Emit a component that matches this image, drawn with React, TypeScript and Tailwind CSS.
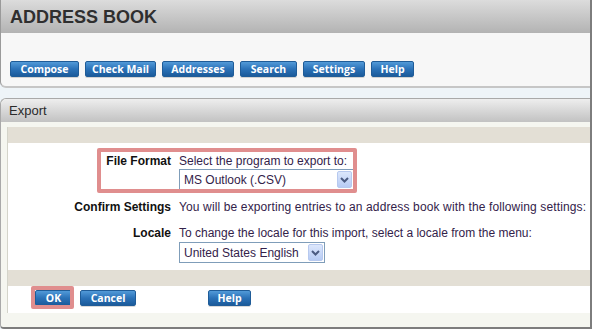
import React from "react";

function Btn({ label, w }: { label: string; w: string }) {
  return (
    <div
      className={`${w} h-[16px] rounded-[2px] border border-[#1f5c98] bg-gradient-to-b from-[#529ad8] via-[#2b72b8] to-[#1b5b9b] flex items-center justify-center text-white text-[10.5px] font-bold leading-none font-['Open_Sans',sans-serif] shadow-[0_1px_0_rgba(0,0,0,0.15)]`}
    >
      {label}
    </div>
  );
}

function Chevron() {
  return (
    <svg width="9" height="6" viewBox="0 0 9 6">
      <path d="M1 1 L4.5 4.5 L8 1" stroke="#4b5b82" strokeWidth="2" fill="none" />
    </svg>
  );
}

function Select({ text, w }: { text: string; w: string }) {
  return (
    <div
      className={`${w} h-[21px] border border-[#7f9db9] bg-white flex items-center justify-between pl-[4px] pr-[1px]`}
    >
      <span className="text-[12px] text-[#33224a] leading-none">{text}</span>
      <div className="w-[15px] h-[17px] rounded-[2px] border border-[#b7c9ef] bg-gradient-to-b from-[#dce7fc] to-[#b7cbf4] flex items-center justify-center">
        <Chevron />
      </div>
    </div>
  );
}

export default function App() {
  return (
    <div className="relative w-[592px] h-[329px] flex flex-col bg-[#eef4f8] border-r-2 border-r-[#7d7d7d] overflow-hidden font-['Liberation_Sans',Arial,sans-serif]">
      {/* Top panel */}
      <div className="h-[88px] flex flex-col bg-[#f7f7f7] border-l border-l-[#9a9a9a] border-b-2 border-b-[#c6c6c6] rounded-bl-[6px]">
        <div className="h-[33px] bg-gradient-to-b from-[#dcdcdc] to-[#b3b3b3] flex items-center pl-[9px]">
          <span className="text-[18px] font-bold text-[#2f2f2f] leading-none">ADDRESS BOOK</span>
        </div>
        <div className="flex gap-[6px] pl-[9px] pt-[28px]">
          <Btn label="Compose" w="w-[69px]" />
          <Btn label="Check Mail" w="w-[71px]" />
          <Btn label="Addresses" w="w-[72px]" />
          <Btn label="Search" w="w-[57px]" />
          <Btn label="Settings" w="w-[62px]" />
          <Btn label="Help" w="w-[43px]" />
        </div>
      </div>

      {/* Export panel */}
      <div className="mt-[10px] flex-1 flex flex-col border-l border-t border-[#a9a9a9] border-b-2 border-b-[#7d7d7d] rounded-tl-[6px] rounded-bl-[4px] bg-[#f5f6f0]">
        <div className="h-[23px] bg-gradient-to-b from-[#eeeeee] to-[#c2c2c2] flex items-center pl-[8px] rounded-tl-[6px]">
          <span className="text-[13px] text-[#2a2a2a] leading-none">Export</span>
        </div>
        <div className="pt-[5px] pl-[6px]">
          <div className="border-l border-l-[#d4d4ca] bg-white flex flex-col">
            <div className="h-[16px] bg-[#e3dfd5]" />
            <div className="h-[127px] pt-[11px] flex flex-col text-[12px] leading-[14px]">
              <div className="flex gap-[8px]">
                <div className="w-[163px] text-right font-bold text-[#111]">File Format</div>
                <div className="flex flex-col">
                  <span className="text-[#33224a]">Select the program to export to:</span>
                  <div className="mt-[1px]">
                    <Select text="MS Outlook (.CSV)" w="w-[175px]" />
                  </div>
                </div>
              </div>
              <div className="flex gap-[8px] mt-[10px]">
                <div className="w-[163px] text-right font-bold text-[#111]">Confirm Settings</div>
                <span className="text-[#33224a] whitespace-nowrap tracking-[0.13px]">
                  You will be exporting entries to an address book with the following settings:
                </span>
              </div>
              <div className="flex gap-[8px] mt-[12px]">
                <div className="w-[163px] text-right font-bold text-[#111]">Locale</div>
                <div className="flex flex-col">
                  <span className="text-[#33224a]">To change the locale for this import, select a locale from the menu:</span>
                  <div className="mt-[2px]">
                    <Select text="United States English" w="w-[146px]" />
                  </div>
                </div>
              </div>
            </div>
            <div className="h-[16px] bg-[#e3dfd5]" />
            <div className="h-[27px] pt-[4px] pl-[27px] flex">
              <Btn label="OK" w="w-[37px]" />
              <div className="ml-[8px]">
                <Btn label="Cancel" w="w-[56px]" />
              </div>
              <div className="ml-[72px]">
                <Btn label="Help" w="w-[43px]" />
              </div>
            </div>
          </div>
        </div>
      </div>

      {/* Highlight annotations */}
      <div className="absolute left-[97px] top-[148px] w-[260px] h-[45px] border-[4px] border-[#e08e8e] rounded-[2px] pointer-events-none" />
      <div className="absolute left-[31px] top-[286px] w-[43px] h-[23px] border-[4px] border-[#e08e8e] rounded-[2px] pointer-events-none" />
    </div>
  );
}
